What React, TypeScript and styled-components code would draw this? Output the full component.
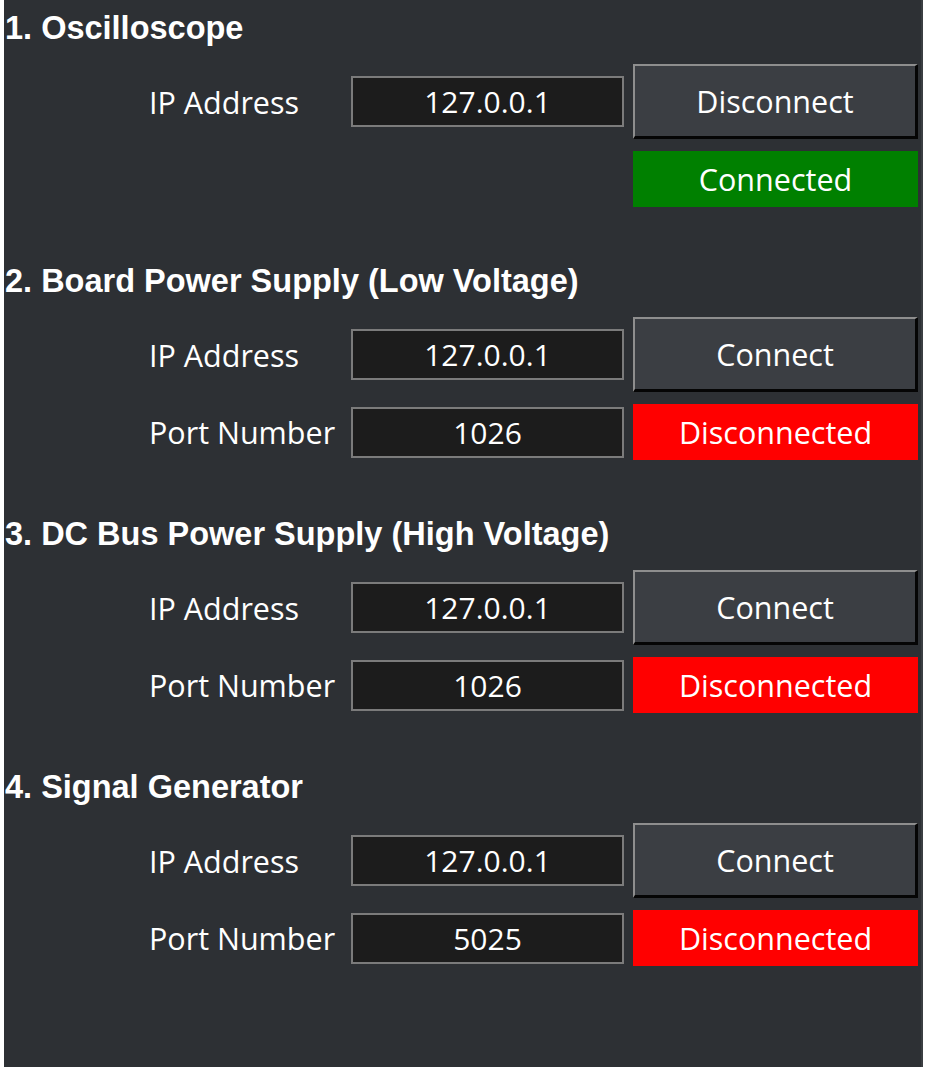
import React from "react";
import styled, { createGlobalStyle } from "styled-components";

const Global = createGlobalStyle`
  html, body { margin: 0; padding: 0; background: #ffffff; }
  body { width: 925px; height: 1067px; overflow: hidden; }
  #root { height: 100%; }
`;

const Panel = styled.div`
  margin-left: 4px;
  width: 919px;
  height: 1067px;
  box-sizing: border-box;
  background: #2d3034;
  border-right: 2px solid #3b3e42;
  padding: 10px 0 0 1px;
  display: flex;
  flex-direction: column;
  gap: 56px;
  font-family: "Open Sans", "Noto Sans", sans-serif;
  color: #ffffff;
`;

const Section = styled.section`
  display: flex;
  flex-direction: column;
  gap: 18px;
`;

const Heading = styled.h2`
  margin: 0;
  font-family: "Liberation Sans", Arial, sans-serif;
  font-weight: 700;
  font-size: 32.5px;
  line-height: 36px;
  color: #ffffff;
`;

const Grid = styled.div`
  display: grid;
  grid-template-columns: 193px 273px 285px;
  column-gap: 9px;
  row-gap: 12px;
  padding-left: 144px;
  align-items: center;
`;

const Label = styled.div`
  font-size: 30.5px;
  line-height: 36px;
  white-space: nowrap;
`;

const Field = styled.div`
  height: 51px;
  box-sizing: border-box;
  background: #1c1c1c;
  border: 2px solid #7b7b7b;
  display: flex;
  align-items: center;
  justify-content: center;
  font-size: 30px;
`;

const Button = styled.button`
  height: 75px;
  box-sizing: border-box;
  background: #3b3e43;
  color: #ffffff;
  font-family: "Open Sans", "Noto Sans", sans-serif;
  font-size: 30.5px;
  border-style: solid;
  border-width: 2px 3px 3px 2px;
  border-color: #8e8e8e #050505 #050505 #8e8e8e;
  padding: 0;
  cursor: pointer;
`;

const Status = styled.div<{ $ok: boolean }>`
  height: 56px;
  box-sizing: border-box;
  background: ${(p) => (p.$ok ? "#008000" : "#ff0000")};
  display: flex;
  align-items: center;
  justify-content: center;
  font-size: 30.5px;
`;

const Spacer = styled.div``;

type Dev = {
  title: string;
  ip: string;
  port?: string;
  connected: boolean;
};

const devices: Dev[] = [
  { title: "1. Oscilloscope", ip: "127.0.0.1", connected: true },
  { title: "2. Board Power Supply (Low Voltage)", ip: "127.0.0.1", port: "1026", connected: false },
  { title: "3. DC Bus Power Supply (High Voltage)", ip: "127.0.0.1", port: "1026", connected: false },
  { title: "4. Signal Generator", ip: "127.0.0.1", port: "5025", connected: false },
];

export default function App() {
  return (
    <>
      <Global />
      <Panel>
        {devices.map((d) => (
          <Section key={d.title}>
            <Heading>{d.title}</Heading>
            <Grid>
              <Label>IP Address</Label>
              <Field>{d.ip}</Field>
              <Button>{d.connected ? "Disconnect" : "Connect"}</Button>
              {d.port ? <Label>Port Number</Label> : <Spacer />}
              {d.port ? <Field>{d.port}</Field> : <Spacer />}
              <Status $ok={d.connected}>{d.connected ? "Connected" : "Disconnected"}</Status>
            </Grid>
          </Section>
        ))}
      </Panel>
    </>
  );
}
